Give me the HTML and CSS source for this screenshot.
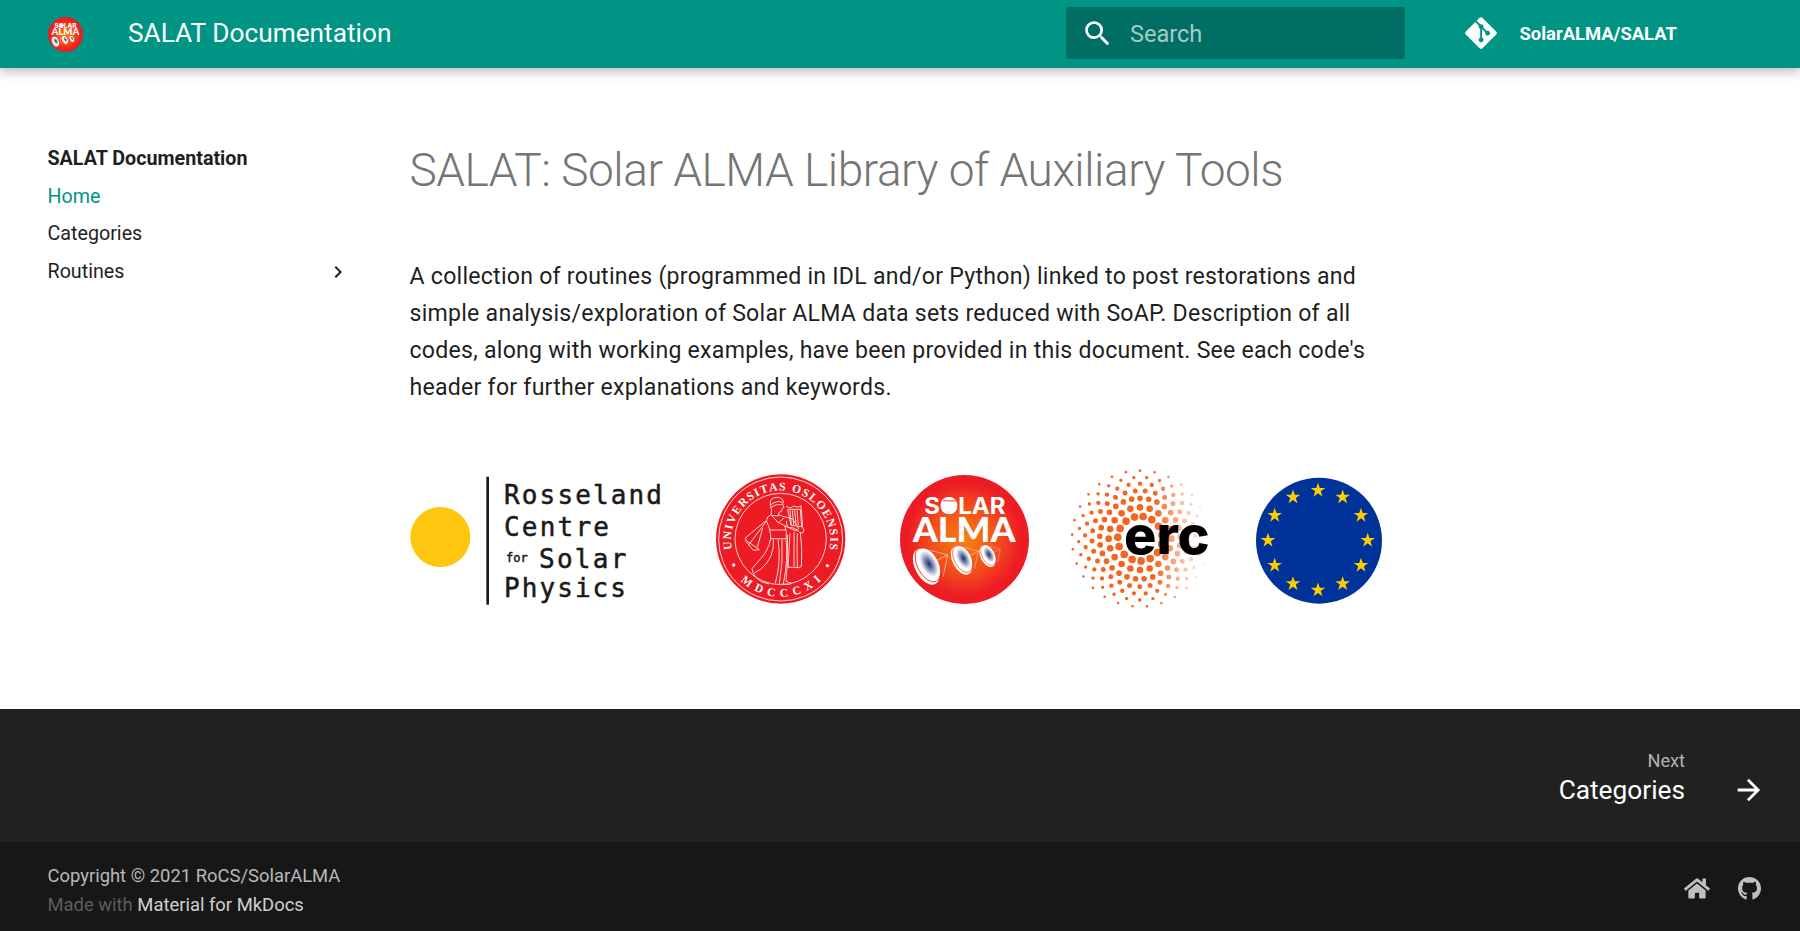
FILE: index.html
```html
<!DOCTYPE html>
<html lang="en">
<head>
<meta charset="utf-8">
<title>SALAT Documentation</title>
<link rel="stylesheet" href="styles.css">
</head>
<body>
<svg class="defs" width="0" height="0" aria-hidden="true">
  <defs>
    <radialGradient id="sun" cx="50%" cy="50%" r="50%">
      <stop offset="0" stop-color="#f7820f"/><stop offset=".5" stop-color="#f2501b"/><stop offset=".88" stop-color="#ed1c24"/>
    </radialGradient>
    <radialGradient id="dish"><stop offset="0" stop-color="#1f2c6b"/><stop offset=".3" stop-color="#6a74a3"/><stop offset=".85" stop-color="#fff"/></radialGradient>
    <g id="antenna">
      <path d="M10-46L62-32 48 34M62-32L0 0" fill="none" stroke="#fbd5c8" stroke-width="2"/>
      <g transform="rotate(-28)">
        <ellipse cx="-3" cy="2" rx="33" ry="58" fill="#fff"/>
        <ellipse cx="3" cy="-1" rx="30" ry="55" fill="#fff" stroke="#ed3a2c" stroke-width="2.5"/>
        <ellipse cx="8" cy="-2" rx="27" ry="50" fill="url(#dish)"/>
      </g>
    </g>
    <symbol id="solar-alma" viewBox="0 0 384 384">
      <circle cx="192" cy="192" r="192" fill="url(#sun)"/>
      <g class="alma-text">
        <text class="solar" x="72" y="117" font-size="67" textLength="242" lengthAdjust="spacingAndGlyphs">SOLAR</text>
        <text x="38" y="200" font-size="103" textLength="306" lengthAdjust="spacingAndGlyphs">ALMA</text>
      </g>
      <circle cx="147" cy="94" r="23" fill="#fff"/>
      <path d="M128 77h38" stroke="#ef3a22" stroke-width="3"/>
      <use href="#antenna" x="80" y="270"/>
      <use href="#antenna" transform="translate(184 252) scale(.79)"/>
      <use href="#antenna" transform="translate(261 240) scale(.6)"/>
    </symbol>
    <path id="star" d="M0-16L3.8-5H15.5L6 2 9.600 13.500 0 6.500-9.600 13.500-6 2-15.500-5H-3.800Z" fill="#fc0"/>
    <linearGradient id="fade" gradientUnits="userSpaceOnUse" x1="280" y1="0" x2="440" y2="0">
      <stop offset="0" stop-color="#fff"/><stop offset=".35" stop-color="#fff" stop-opacity=".6"/><stop offset="1" stop-color="#fff" stop-opacity=".02"/>
    </linearGradient>
    <mask id="fade-mask" maskUnits="userSpaceOnUse" x="0" y="0" width="480" height="480"><rect width="480" height="480" fill="url(#fade)"/></mask>
    <path id="arc-top" d="M96 270A149 149 0 1 1 388 270"/>
    <path id="arc-bottom" d="M82 305A174 174 0 0 0 402 305"/>
  </defs>
</svg>

<header class="header">
  <svg class="header-logo"><use href="#solar-alma"/></svg>
  <div class="header-title">SALAT Documentation</div>
  <div class="search">
    <svg class="search-icon" viewBox="0 0 24 24"><path fill="currentColor" d="M9.500 3A6.500 6.500 0 0 1 16 9.500c0 1.610-.59 3.090-1.560 4.230l.27.27h.79l5 5-1.500 1.500-5-5v-.79l-.27-.27A6.516 6.516 0 0 1 9.500 16 6.500 6.500 0 0 1 3 9.500 6.500 6.500 0 0 1 9.500 3m0 2C7 5 5 7 5 9.500S7 14 9.500 14 14 12 14 9.500 12 5 9.500 5z"/></svg>
    <span>Search</span>
  </div>
  <a class="source">
    <svg class="source-icon" viewBox="0 0 448 512"><path fill="currentColor" d="M439.550 236.050L244 40.450a28.870 28.870 0 0 0-40.810 0l-40.660 40.630 51.520 51.520c27.060-9.140 52.680 16.770 43.390 43.680l49.660 49.660c34.230-11.800 61.180 31 35.470 56.690-26.490 26.490-70.210-2.870-56-37.340L240.220 199v121.850c25.300 12.540 22.260 41.850 9.080 55a34.340 34.340 0 0 1-48.550 0c-17.570-17.600-11.070-46.910 11.250-56v-123c-20.800-8.510-24.600-30.740-18.640-45L142.570 101 8.450 235.140a28.860 28.860 0 0 0 0 40.810l195.610 195.600a28.860 28.860 0 0 0 40.800 0l194.690-194.690a28.860 28.860 0 0 0 0-40.810z"/></svg>
    <span>SolarALMA/SALAT</span>
  </a>
</header>

<div class="container">
  <nav class="nav">
    <div class="nav-title">SALAT Documentation</div>
    <a class="nav-item active">Home</a>
    <a class="nav-item">Categories</a>
    <a class="nav-item">Routines
      <svg class="nav-icon" viewBox="0 0 24 24"><path fill="currentColor" d="M8.590 16.580L13.170 12 8.590 7.410 10 6l6 6-6 6-1.410-1.420z"/></svg>
    </a>
  </nav>
  <main class="content">
    <h1>SALAT: Solar ALMA Library of Auxiliary Tools</h1>
    <p>A collection of routines (programmed in IDL and/or Python) linked to post restorations and<br>simple analysis/exploration of Solar ALMA data sets reduced with SoAP. Description of all<br>codes, along with working examples, have been provided in this document. See each code's<br>header for further explanations and keywords.</p>
    <div class="logos">
      <svg class="logo-rocs" viewBox="0 0 840 480">
        <circle cx="121" cy="231" r="90" fill="#fec60e"/>
        <path d="M263 50V434" stroke="#1a1a1a" stroke-width="8"/>
        <g class="rocs-text">
          <text x="312" y="131" textLength="474">Rosseland</text>
          <text x="312" y="228" textLength="315">Centre</text>
          <text class="small" x="318" y="306" textLength="65">for</text>
          <text x="417" y="323" textLength="262">Solar</text>
          <text x="312" y="411" textLength="366">Physics</text>
        </g>
      </svg>
      <svg class="logo-round" viewBox="0 0 480 480">
        <circle cx="242" cy="237" r="194" fill="#ed1c24"/>
        <g fill="none" stroke="#fbd3d3" stroke-width="3">
          <circle cx="242" cy="237" r="186"/><circle cx="242" cy="237" r="137"/>
          <path d="M211 136q-4-22 18-24 18-2 22 16l-4 2 5 12-5 3q0 12-10 12l-2 11-22-2q4-16-2-30zM213 134q18-14 34-7M213 142q16-12 32-8"/>
          <path d="M213 164q-12 4-14 18l-36 29-28 24 7 9 36 25-18 2-25-30M199 182q14 30 13 54h47q2-22-5-39M235 164l14 5 29 8 18 28-8 8-34-16-24-12M216 168l20 20 16-14M210 210h48"/>
          <path d="M212 236q-8 38-30 60l-26 30q2 20 26 38l25 8M220 238q5 54-38 90l-18 10M234 238q10 68-8 132M246 238q4 64-8 134M258 238q7 60-8 134M262 224q5 70-4 140l18 6q-8 5-32 2M270 220q-3 50-6 102h28M292 220q-2 44 0 104l12-4q4-50-3-104M282 215v104M199 184l-54 72M188 204l-16 58"/>
          <path d="M259 139q14 9 21-1 17 6 23-1l5 66q8 8 1 15-12 4-16-8l-16-7-15-1-3-20M263 148h38l4 52-32-4zM270 151l4 44M277 151l4 44M284 151l4 44M291 151l4 44"/>
        </g>
        <circle cx="101" cy="315" r="5" fill="#fff"/><circle cx="382" cy="317" r="5" fill="#fff"/>
        <g class="seal-text">
          <text textLength="524"><textPath href="#arc-top" startOffset="2" textLength="524">UNIVERSITAS OSLOENSIS</textPath></text>
          <text textLength="268"><textPath href="#arc-bottom" startOffset="70" textLength="268">MDCCCXI</textPath></text>
        </g>
      </svg>
      <svg class="logo-alma"><use href="#solar-alma"/></svg>
      <svg class="logo-round logo-erc" viewBox="0 0 480 480">
        <g fill="none" stroke="#f26522" stroke-linecap="round" mask="url(#fade-mask)">
          <circle cx="237" cy="236" r="204" pathLength="290" stroke-width="8" stroke-dasharray="0 10" transform="rotate(-90 237 236)"/>
          <circle cx="237" cy="236" r="184" pathLength="290" stroke-width="10" stroke-dasharray="0 10" transform="rotate(-83.800 237 236)"/>
          <circle cx="237" cy="236" r="165" pathLength="290" stroke-width="13" stroke-dasharray="0 10" transform="rotate(-90 237 236)"/>
          <circle cx="237" cy="236" r="144" pathLength="290" stroke-width="15" stroke-dasharray="0 10" transform="rotate(-83.800 237 236)"/>
          <circle cx="237" cy="236" r="121" pathLength="290" stroke-width="17" stroke-dasharray="0 10" transform="rotate(-90 237 236)"/>
          <circle cx="237" cy="236" r="94" pathLength="200" stroke-width="20" stroke-dasharray="0 10" transform="rotate(-90 237 236)"/>
          <circle cx="237" cy="236" r="67" pathLength="150" stroke-width="23" stroke-dasharray="0 10" transform="rotate(-82 237 236)"/>
        </g>
        <text class="erc-text" x="189" y="281" textLength="257" lengthAdjust="spacingAndGlyphs">erc</text>
      </svg>
      <svg class="logo-round logo-eu" viewBox="0 0 480 480">
        <circle cx="234" cy="242" r="189" fill="#039"/>
        <use href="#star" transform="translate(231 91) scale(1.400)"/>
        <use href="#star" transform="translate(305 111) scale(1.400)"/>
        <use href="#star" transform="translate(360 166) scale(1.400)"/>
        <use href="#star" transform="translate(380 241) scale(1.400)"/>
        <use href="#star" transform="translate(360 316) scale(1.400)"/>
        <use href="#star" transform="translate(305 371) scale(1.400)"/>
        <use href="#star" transform="translate(231 390) scale(1.400)"/>
        <use href="#star" transform="translate(156 371) scale(1.400)"/>
        <use href="#star" transform="translate(101 316) scale(1.400)"/>
        <use href="#star" transform="translate(81 241) scale(1.400)"/>
        <use href="#star" transform="translate(101 166) scale(1.400)"/>
        <use href="#star" transform="translate(156 111) scale(1.400)"/>
      </svg>
    </div>
  </main>
</div>

<footer class="footer">
  <a class="footer-next">
    <span class="footer-label"><small>Next</small>Categories</span>
    <svg class="arrow" viewBox="0 0 24 24"><path fill="currentColor" d="M4 11v2h12l-5.500 5.500 1.420 1.420L19.840 12l-7.920-7.920L10.500 5.500 16 11H4z"/></svg>
  </a>
  <div class="footer-meta">
    <div class="copyright">
      <div>Copyright © 2021 RoCS/SolarALMA</div>
      <div><span class="made">Made with</span> <a>Material for MkDocs</a></div>
    </div>
    <div class="social">
      <svg class="home-icon" viewBox="0 0 576 512"><path fill="currentColor" d="M280.370 148.260L96 300.110V464a16 16 0 0 0 16 16l112.060-.29a16 16 0 0 0 15.920-16V368a16 16 0 0 1 16-16h64a16 16 0 0 1 16 16v95.640a16 16 0 0 0 16 16.050L464 480a16 16 0 0 0 16-16V300L295.670 148.260a12.190 12.190 0 0 0-15.300 0zM571.600 251.470L488 182.560V44.050a12 12 0 0 0-12-12h-56a12 12 0 0 0-12 12v72.610L318.470 43a48 48 0 0 0-61 0L4.340 251.470a12 12 0 0 0-1.600 16.900l25.500 31A12 12 0 0 0 45.150 301l235.220-193.740a12.190 12.190 0 0 1 15.300 0L530.900 301a12 12 0 0 0 16.900-1.600l25.500-31a12 12 0 0 0-1.700-16.930z"/></svg>
      <svg class="github-icon" viewBox="0 0 496 496"><path fill="currentColor" d="M165.900 389.400c0 2-2.300 3.600-5.200 3.600-3.300.3-5.600-1.300-5.600-3.600 0-2 2.300-3.600 5.200-3.600 3-.3 5.600 1.300 5.600 3.600zM244.800 0C106.100 0 0 105.300 0 244c0 110.900 69.800 205.800 169.500 239.200 12.800 2.300 17.300-5.600 17.300-12.100 0-6.200-.3-40.400-.3-61.400 0 0-70 15-84.700-29.800 0 0-11.400-29.100-27.800-36.600 0 0-22.900-15.700 1.600-15.400 0 0 24.900 2 38.600 25.800 21.900 38.600 58.600 27.500 72.900 20.900 2.300-16 8.800-27.100 16-33.700-55.900-6.200-112.300-14.300-112.300-110.500 0-27.500 7.600-41.300 23.600-58.900-2.600-6.500-11.100-33.300 2.600-67.900 20.900-6.500 69 27 69 27 20-5.600 41.500-8.500 62.800-8.500s42.800 2.900 62.800 8.500c0 0 48.100-33.600 69-27 13.700 34.700 5.200 61.400 2.600 67.900 16 17.700 25.800 31.500 25.800 58.900 0 96.500-58.900 104.200-114.800 110.500 9.200 7.900 17 22.900 17 46.400 0 33.700-.3 75.400-.3 83.600 0 6.500 4.600 14.400 17.300 12.100C428.200 449.800 496 354.900 496 244 496 105.300 383.500 0 244.800 0z"/></svg>
    </div>
  </div>
</footer>
</body>
</html>
```
FILE: styles.css
```css
* { box-sizing: border-box; }
body {
  margin: 0;
  height: 931px;
  display: flex;
  flex-direction: column;
  overflow: hidden;
  background: #fff;
  color: #1f1f1f;
  font-family: Roboto, "Liberation Sans", sans-serif;
}
svg { display: block; flex: none; }
.defs { position: absolute; }

.header {
  flex: none;
  height: 68px;
  display: flex;
  align-items: center;
  background: #009485;
  color: #fff;
  padding-left: 47.500px;
  box-shadow: 0 0 5px rgba(0, 0, 0, .1), 0 6px 9px rgba(0, 0, 0, .18);
  position: relative;
}
.header-logo { width: 35px; height: 35px; }
.header-title { margin-left: 45.500px; width: 938px; font-size: 26.250px; line-height: 34px; padding-bottom: 3px; }
.search {
  width: 339px;
  height: 52px;
  margin-bottom: 2px;
  padding-left: 15px;
  display: flex;
  align-items: center;
  gap: 16px;
  border-radius: 3px;
  background: #006e63;
  color: #a6cbc7;
  font-size: 23.500px;
}
.search span { padding-top: 2px; }
.search-icon { width: 33px; height: 33px; color: #fff; }
.source {
  margin-left: 60px;
  display: flex;
  align-items: center;
  gap: 22.500px;
  font-size: 18.400px;
  font-weight: 700;
  padding-bottom: 2px;
}
.source-icon { width: 32px; height: 36px; }

.container { flex: 1; display: flex; padding-left: 47.500px; }
.nav { width: 362px; padding-top: 78px; font-size: 19.700px; line-height: 25px; }
.nav-title { font-weight: 700; }
.nav-item { display: flex; justify-content: space-between; align-items: center; width: 302px; margin-top: 12.700px; }
.nav-item.active { color: #009485; }
.nav-icon { width: 24px; height: 24px; }

h1 { margin: 72px 0 0; font-weight: 300; font-size: 46px; line-height: 60px; color: #757575; letter-spacing: -.460px; }
p { margin: 59px 0 0; font-size: 23.100px; line-height: 36.900px; letter-spacing: .250px; white-space: nowrap; }
.logos { display: flex; margin-top: 53px; margin-left: -9.500px; }
.logo-rocs { width: 280px; height: 160px; }
.rocs-text { font: 78px "DejaVu Sans Mono", monospace; fill: #1a1a1a; stroke: #1a1a1a; stroke-width: 1.500px; }
.rocs-text .small { font-size: 36px; }
.logo-round { width: 160px; height: 160px; margin-left: 20px; }
.logo-alma { width: 129px; height: 129px; margin: 15.500px 0 0 40px; }
.logo-erc { margin-left: 31.500px; }
.seal-text { font: 700 35px "Liberation Serif", serif; fill: #fff; }
.alma-text { font-family: Lato, "Liberation Sans", sans-serif; font-weight: 900; fill: #fff; }
.alma-text .solar { font-family: Inter, "Liberation Sans", sans-serif; font-weight: 700; }
.erc-text { font: 800 160px Inter, "Liberation Sans", sans-serif; }

.footer { flex: none; background: #212121; color: #fff; }
.footer-next { height: 133px; display: flex; justify-content: flex-end; padding: 38px 34px 0 0; }
.footer-label { font-size: 26.250px; line-height: 32px; text-align: right; display: flex; flex-direction: column; }
.footer-label small { font-size: 18.200px; line-height: 27px; color: #b3b3b3; }
.arrow { width: 34px; height: 34px; margin: 26px 0 0 47px; }
.footer-meta { height: 89px; display: flex; justify-content: space-between; background: #171717; padding: 19px 39px 0 47.500px; }
.copyright { font-size: 18.420px; line-height: 29px; color: #b9b9b9; }
.made { color: #5d5d5d; }
.copyright a { color: #d0d0d0; }
.social { display: flex; align-items: center; gap: 28px; color: #bfbfbf; padding-bottom: 15px; }
.home-icon { width: 26px; height: 23px; }
.github-icon { width: 23px; height: 23px; }
```
